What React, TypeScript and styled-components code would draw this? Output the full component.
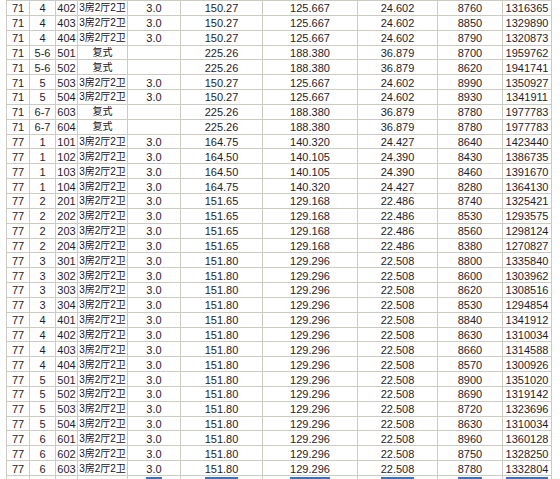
import styled, { createGlobalStyle } from "styled-components";

const GlobalStyle = createGlobalStyle`
  html, body {
    margin: 0;
    padding: 0;
    background: #ffffff;
    overflow: hidden;
  }
`;

const Page = styled.div`
  height: 479px;
  overflow: hidden;
  padding-left: 6px;
`;

const Table = styled.table`
  border-collapse: collapse;
  table-layout: fixed;
  width: 545px;
  font-family: "Liberation Sans", Arial, sans-serif;
  font-size: 11px;
  color: #1f1c2a;
`;

const Row = styled.tr`
  height: 14.85px;
`;

const Cell = styled.td<{ $cjk?: boolean }>`
  border: 1px solid #cbcbc2;
  padding: 0;
  padding-top: 1px;
  text-align: center;
  white-space: nowrap;
  overflow: hidden;
  line-height: 12px;
  ${(p) =>
    p.$cjk &&
    `
    font-family: "Liberation Sans", "Noto Sans CJK SC", sans-serif;
    font-size: 10px;
    color: #141220;
  `}
`;

const Picked = styled.span`
  background: #3d6fc2;
  color: #ffffff;
`;

const widths = [23, 26, 22, 50, 53, 82, 95, 80, 65, 49];

const rows: string[][] = [
  ["71", "4", "402", "3房2厅2卫", "3.0", "150.27", "125.667", "24.602", "8760", "1316365"],
  ["71", "4", "403", "3房2厅2卫", "3.0", "150.27", "125.667", "24.602", "8850", "1329890"],
  ["71", "4", "404", "3房2厅2卫", "3.0", "150.27", "125.667", "24.602", "8790", "1320873"],
  ["71", "5-6", "501", "复式", "", "225.26", "188.380", "36.879", "8700", "1959762"],
  ["71", "5-6", "502", "复式", "", "225.26", "188.380", "36.879", "8620", "1941741"],
  ["71", "5", "503", "3房2厅2卫", "3.0", "150.27", "125.667", "24.602", "8990", "1350927"],
  ["71", "5", "504", "3房2厅2卫", "3.0", "150.27", "125.667", "24.602", "8930", "1341911"],
  ["71", "6-7", "603", "复式", "", "225.26", "188.380", "36.879", "8780", "1977783"],
  ["71", "6-7", "604", "复式", "", "225.26", "188.380", "36.879", "8780", "1977783"],
  ["77", "1", "101", "3房2厅2卫", "3.0", "164.75", "140.320", "24.427", "8640", "1423440"],
  ["77", "1", "102", "3房2厅2卫", "3.0", "164.50", "140.105", "24.390", "8430", "1386735"],
  ["77", "1", "103", "3房2厅2卫", "3.0", "164.50", "140.105", "24.390", "8460", "1391670"],
  ["77", "1", "104", "3房2厅2卫", "3.0", "164.75", "140.320", "24.427", "8280", "1364130"],
  ["77", "2", "201", "3房2厅2卫", "3.0", "151.65", "129.168", "22.486", "8740", "1325421"],
  ["77", "2", "202", "3房2厅2卫", "3.0", "151.65", "129.168", "22.486", "8530", "1293575"],
  ["77", "2", "203", "3房2厅2卫", "3.0", "151.65", "129.168", "22.486", "8560", "1298124"],
  ["77", "2", "204", "3房2厅2卫", "3.0", "151.65", "129.168", "22.486", "8380", "1270827"],
  ["77", "3", "301", "3房2厅2卫", "3.0", "151.80", "129.296", "22.508", "8800", "1335840"],
  ["77", "3", "302", "3房2厅2卫", "3.0", "151.80", "129.296", "22.508", "8600", "1303962"],
  ["77", "3", "303", "3房2厅2卫", "3.0", "151.80", "129.296", "22.508", "8620", "1308516"],
  ["77", "3", "304", "3房2厅2卫", "3.0", "151.80", "129.296", "22.508", "8530", "1294854"],
  ["77", "4", "401", "3房2厅2卫", "3.0", "151.80", "129.296", "22.508", "8840", "1341912"],
  ["77", "4", "402", "3房2厅2卫", "3.0", "151.80", "129.296", "22.508", "8630", "1310034"],
  ["77", "4", "403", "3房2厅2卫", "3.0", "151.80", "129.296", "22.508", "8660", "1314588"],
  ["77", "4", "404", "3房2厅2卫", "3.0", "151.80", "129.296", "22.508", "8570", "1300926"],
  ["77", "5", "501", "3房2厅2卫", "3.0", "151.80", "129.296", "22.508", "8900", "1351020"],
  ["77", "5", "502", "3房2厅2卫", "3.0", "151.80", "129.296", "22.508", "8690", "1319142"],
  ["77", "5", "503", "3房2厅2卫", "3.0", "151.80", "129.296", "22.508", "8720", "1323696"],
  ["77", "5", "504", "3房2厅2卫", "3.0", "151.80", "129.296", "22.508", "8630", "1310034"],
  ["77", "6", "601", "3房2厅2卫", "3.0", "151.80", "129.296", "22.508", "8960", "1360128"],
  ["77", "6", "602", "3房2厅2卫", "3.0", "151.80", "129.296", "22.508", "8750", "1328250"],
  ["77", "6", "603", "3房2厅2卫", "3.0", "151.80", "129.296", "22.508", "8780", "1332804"],
];

// the row cut off at the bottom edge is selected; only the highlight tops show
const picked = ["", "", "", "", "3.0", "151.80", "129.296", "22.508", "8700", "1320000"];

const App = () => {
  return (
    <Page>
      <GlobalStyle />
      <Table>
        <colgroup>
          {widths.map((w, i) => (
            <col key={i} style={{ width: w }} />
          ))}
        </colgroup>
        <tbody>
          {rows.map((r, i) => (
            <Row key={i}>
              {r.map((v, j) => (
                <Cell key={j} $cjk={j === 3}>
                  {v}
                </Cell>
              ))}
            </Row>
          ))}
          <Row>
            {picked.map((v, j) => (
              <Cell key={j}>{v && <Picked>{v}</Picked>}</Cell>
            ))}
          </Row>
        </tbody>
      </Table>
    </Page>
  );
};

export default App;
